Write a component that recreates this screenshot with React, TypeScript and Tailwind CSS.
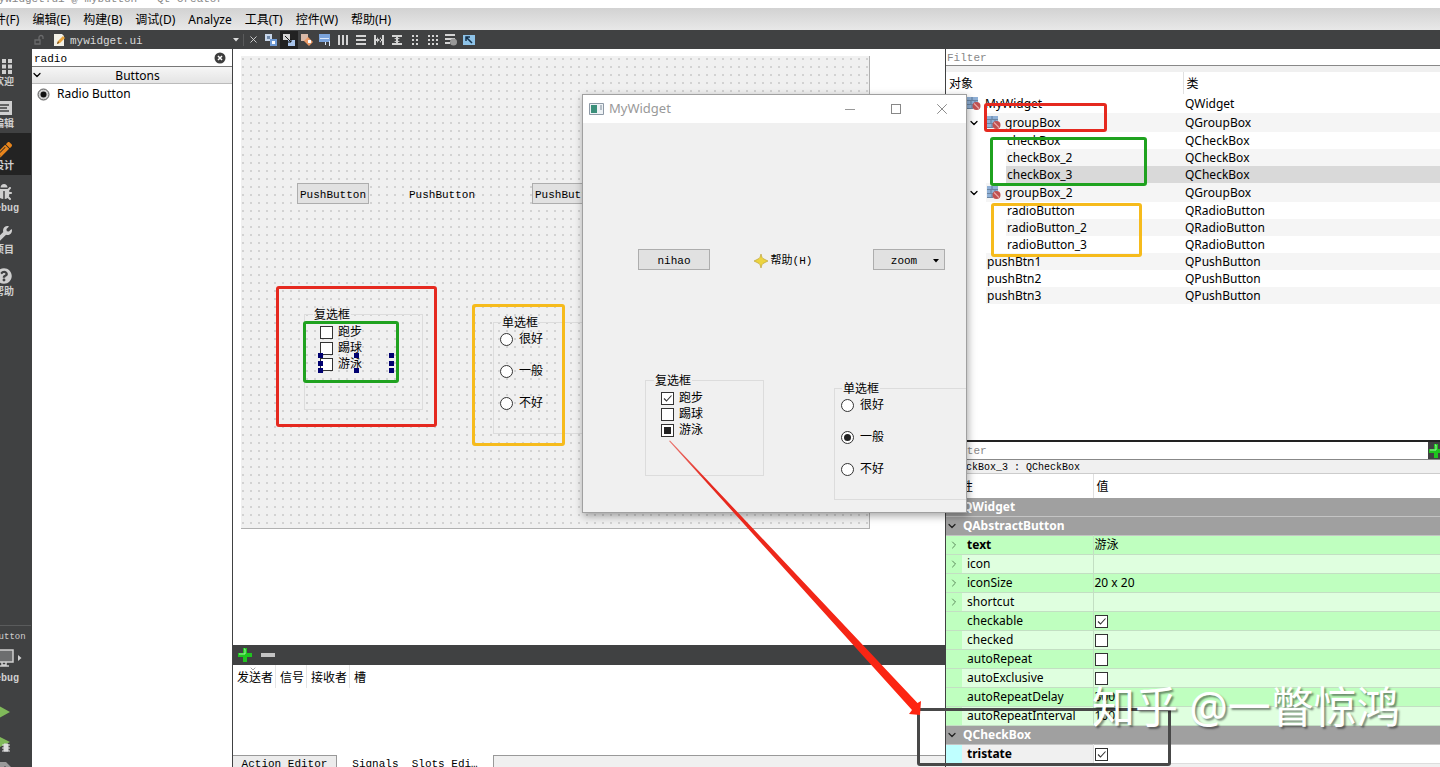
import type { ReactNode } from "react";
import { FaBug, FaPencilAlt, FaQuestionCircle, FaWrench } from "react-icons/fa";
import { ChevronDown, ChevronRight, X } from "lucide-react";
import clsx from "clsx";

const mono = "font-['Liberation_Mono','Noto_Sans_CJK_SC',monospace]";

const menus = ["文件(F)", "编辑(E)", "构建(B)", "调试(D)", "Analyze", "工具(T)", "控件(W)", "帮助(H)"];

type TreeRow = { name: string; type: string; level: 0 | 1 | 2; group?: boolean; selected?: boolean };

const objects: TreeRow[] = [
  { name: "MyWidget", type: "QWidget", level: 0, group: true },
  { name: "groupBox", type: "QGroupBox", level: 1, group: true },
  { name: "checkBox", type: "QCheckBox", level: 2 },
  { name: "checkBox_2", type: "QCheckBox", level: 2 },
  { name: "checkBox_3", type: "QCheckBox", level: 2, selected: true },
  { name: "groupBox_2", type: "QGroupBox", level: 1, group: true },
  { name: "radioButton", type: "QRadioButton", level: 2 },
  { name: "radioButton_2", type: "QRadioButton", level: 2 },
  { name: "radioButton_3", type: "QRadioButton", level: 2 },
  { name: "pushBtn1", type: "QPushButton", level: 1 },
  { name: "pushBtn2", type: "QPushButton", level: 1 },
  { name: "pushBtn3", type: "QPushButton", level: 1 },
];

type Property = { name: string; value?: string; checked?: boolean; expandable?: boolean; bold?: boolean };

const buttonProps: Property[] = [
  { name: "text", value: "游泳", expandable: true, bold: true },
  { name: "icon", expandable: true },
  { name: "iconSize", value: "20 x 20", expandable: true },
  { name: "shortcut", expandable: true },
  { name: "checkable", checked: true },
  { name: "checked", checked: false },
  { name: "autoRepeat", checked: false },
  { name: "autoExclusive", checked: false },
  { name: "autoRepeatDelay", value: "300" },
  { name: "autoRepeatInterval", value: "100" },
];

function Check({ id, checked, partial, label }: { id?: string; checked?: boolean; partial?: boolean; label?: string }) {
  return (
    <span className="relative grid size-[13px] shrink-0">
      <input
        id={id}
        type="checkbox"
        aria-label={label}
        defaultChecked={checked}
        className="peer col-start-1 row-start-1 size-[13px] appearance-none border border-[#333] bg-white"
      />
      {partial ? (
        <svg viewBox="0 0 13 13" className="pointer-events-none col-start-1 row-start-1 size-[13px]">
          <rect x="3" y="3" width="7" height="7" fill="#222" />
        </svg>
      ) : (
        <svg viewBox="0 0 13 13" className="pointer-events-none invisible col-start-1 row-start-1 size-[13px] peer-checked:visible">
          <path d="M3 6.5 5.5 9 10.5 3.5" fill="none" stroke="#333" strokeWidth="1.1" />
        </svg>
      )}
    </span>
  );
}

function Radio({ id, name, checked }: { id: string; name: string; checked?: boolean }) {
  return (
    <span className="grid size-[13px] shrink-0 place-items-center">
      <input
        id={id}
        name={name}
        type="radio"
        defaultChecked={checked}
        className="peer col-start-1 row-start-1 size-[13px] appearance-none rounded-full border border-[#333] bg-white"
      />
      <span className="pointer-events-none invisible col-start-1 row-start-1 size-[7px] rounded-full bg-[#222] peer-checked:visible" />
    </span>
  );
}

function CheckGroup({ prefix, live }: { prefix: string; live?: boolean }) {
  return (
    <fieldset className="h-[104px] w-[119px] border border-[#dcdcdc] pt-px pl-[15px] text-[12px] leading-4">
      <legend className="ml-[-7px] px-px pt-px leading-4">复选框</legend>
      {["跑步", "踢球", "游泳"].map((text, i) => (
        <div key={text} className="flex h-4 items-center gap-[5px]">
          <Check id={`${prefix}-check-${i}`} checked={live && i === 0} partial={live && i === 2} />
          <label htmlFor={`${prefix}-check-${i}`}>{text}</label>
        </div>
      ))}
    </fieldset>
  );
}

function RadioGroup({ prefix, live }: { prefix: string; live?: boolean }) {
  return (
    <fieldset className="h-[120px] w-[160px] border border-[#dcdcdc] pl-[6px] text-[12px] leading-4">
      <legend className="ml-px px-px pt-px leading-4">单选框</legend>
      <div className="flex flex-col gap-4">
        {["很好", "一般", "不好"].map((text, i) => (
          <div key={text} className="flex h-4 items-center gap-[6px]">
            <Radio id={`${prefix}-radio-${i}`} name={`${prefix}-mood`} checked={live && i === 1} />
            <label htmlFor={`${prefix}-radio-${i}`}>{text}</label>
          </div>
        ))}
      </div>
    </fieldset>
  );
}

function PushButton({ children, flat }: { children: ReactNode; flat?: boolean }) {
  return (
    <button
      className={clsx(
        mono,
        "flex h-[21px] w-[72px] items-center justify-center border pt-[2px] text-[11px] leading-4",
        flat ? "border-transparent" : "border-[#adadad] bg-[#e1e1e1]"
      )}
    >
      {children}
    </button>
  );
}

function ContainerIcon() {
  return (
    <svg viewBox="0 0 14 14" className="size-[14px] shrink-0">
      <path d="M0 0h11v3H0zM0 4h11v3H0zM0 8h8v3H0z" fill="#8fb0d6" />
      <path d="M0 3.500h11M0 7.500h8M0 11.500h6M5 0v3M8 4v3M4 4v3M5 8v3" stroke="#5a7898" strokeWidth=".9" />
      <circle cx="9.5" cy="9" r="4" fill="#c05050" />
      <path d="m7 6.500 5 5" stroke="#e8a8a8" strokeWidth="1.2" />
    </svg>
  );
}

function PlusIcon() {
  return (
    <svg viewBox="0 0 14 14" className="size-[14px]">
      <path d="M5 0h4v5h5v4H9v5H5V9H0V5h5z" fill="#1fc41f" />
      <path d="M6 1h1v5H1" fill="none" stroke="#a2f5a2" />
    </svg>
  );
}

function ToolIcon({ children, active }: { children: ReactNode; active?: boolean }) {
  return (
    <button className={clsx("grid h-[18px] w-[18px] place-items-center", active && "bg-[#222]")}>
      <svg viewBox="0 0 12 12" className="size-3" fill="#d4d4d4">
        {children}
      </svg>
    </button>
  );
}

function Toolbar() {
  return (
    <div className="flex h-[19px] shrink-0 items-center bg-[#404142] pl-[33px] text-[#d8d8d8]">
      <svg viewBox="0 0 12 12" className="size-3" fill="none" stroke="#6a6b6c" strokeWidth="1.3">
        <path d="M2 6h5v4H2zM6 6V3.500a2 2 0 0 1 4 0V5" />
      </svg>
      <svg viewBox="0 0 12 12" className="ml-2 size-3">
        <path d="M1 0h8l2 2v10H1z" fill="#f2f0e6" />
        <path d="m4 10 1-3 5-5 2 2-5 5z" fill="#e8a33c" />
        <path d="m4 10 1-3 1 2z" fill="#5b3b12" />
      </svg>
      <span className={clsx(mono, "ml-[5px] w-[163px] pt-[3px] text-[11px] leading-4")}>mywidget.ui</span>
      <svg viewBox="0 0 6 4" className="h-1 w-[6px]" fill="#ddd">
        <path d="M0 0h6L3 3.500z" />
      </svg>
      <span className="mx-1 h-3 w-px bg-[#5a5b5c]" />
      <button aria-label="Close document" className="mr-[3px]">
        <X className="size-[11px]" strokeWidth={2} />
      </button>
      <ToolIcon>
        <path d="M0 0h7v7H0z" fill="#c7d6ea" />
        <path d="M5 5h7v7H5z" fill="#6f9bd6" />
        <path d="M7 7h3v3H7z" fill="#fff" />
        <path d="M2 2h3v3H2z" fill="#6f88a8" />
      </ToolIcon>
      <ToolIcon active>
        <path d="M0 0h7v6H0z" />
        <path d="M5 6h7v6H5z" fill="#a9c4ea" />
        <path d="m2 2 6 6M8 5v3H5" stroke="#111" fill="none" />
      </ToolIcon>
      <ToolIcon>
        <path d="M0 0h7v7H0z" fill="#d8b9a8" />
        <path d="m7 3 5 5-4 4-5-5z" fill="#eb9a66" />
        <path d="M7 6h3v3H7z" fill="#fff" />
      </ToolIcon>
      <ToolIcon>
        <path d="M0 0h11v8H0z" fill="#7ba4dc" />
        <path d="M1 4h9v1H1zM6 8h1v3H6zM10 7h1v5h-1z" fill="#dbe8fa" />
      </ToolIcon>
      <ToolIcon>
        <path d="M1 1h2v10H1zM5 1h2v10H5zM9 1h2v10H9z" />
      </ToolIcon>
      <ToolIcon>
        <path d="M1 1h10v2H1zM1 5h10v2H1zM1 9h10v2H1z" />
      </ToolIcon>
      <ToolIcon>
        <path d="M1 1h2v10H1zM9 1h2v10H9zM3 5h6v2H3zM4 3l2 3-2 3zM8 3 6 6l2 3z" />
      </ToolIcon>
      <ToolIcon>
        <path d="M1 1h10v2H1zM1 9h10v2H1zM5 3h2v6H5zM3 4h6L6 6l3 2H3l3-2z" />
      </ToolIcon>
      <ToolIcon>
        <path d="M3 1h2v2H3zM7 1h2v2H7zM3 5h2v2H3zM7 5h2v2H7zM3 9h2v2H3zM7 9h2v2H7z" />
      </ToolIcon>
      <ToolIcon>
        <path d="M1 1h2v2H1zM5 1h2v2H5zM9 1h2v2H9zM1 5h2v2H1zM5 5h2v2H5zM9 5h2v2H9zM1 9h2v2H1zM5 9h2v2H5zM9 9h2v2H9z" />
      </ToolIcon>
      <ToolIcon>
        <path d="M0 0h10v2H0zM0 4h10v2H0zM0 8h5v2H0z" />
        <circle cx="8.500" cy="8" r="3.500" fill="#999" />
      </ToolIcon>
      <ToolIcon>
        <path d="M0 1h12v10H0z" fill="#8ec3e8" />
        <path d="m3 3 6 6M3 7V3h4" stroke="#14324d" strokeWidth="1.500" fill="none" />
      </ToolIcon>
    </div>
  );
}

function Mode({ label, active, children }: { label: string; active?: boolean; children: ReactNode }) {
  return (
    <button
      className={clsx(
        "flex h-[42px] w-[54px] shrink-0 flex-col items-center justify-end text-[#cfcfcf]",
        active && "bg-[#232323]"
      )}
    >
      {children}
      <span className={clsx(mono, "pt-px text-[10px] leading-4 font-bold")}>{label}</span>
    </button>
  );
}

function ModeRail() {
  return (
    <nav className="flex w-[31px] shrink-0 flex-col items-end overflow-hidden bg-[#404142]">
      <Mode label="欢迎">
        <svg viewBox="0 0 16 16" className="size-4" fill="currentColor">
          <path d="M0 1h4v4H0zM6 1h4v4H6zM12 1h4v4h-4zM0 6.500h4v4H0zM6 6.500h4v4H6zM12 6.500h4v4h-4zM0 12h4v4H0zM6 12h4v4H6zM12 12h4v4h-4z" />
        </svg>
      </Mode>
      <Mode label="编辑">
        <svg viewBox="0 0 16 16" className="size-4" fill="currentColor">
          <path d="M0 1h16v14H0z" />
          <path d="M3 5h10M3 8h8M3 11h10" stroke="#404142" strokeWidth="1.300" />
        </svg>
      </Mode>
      <Mode label="设计" active>
        <FaPencilAlt className="size-4 text-[#e8851c]" />
      </Mode>
      <Mode label="Debug">
        <FaBug className="size-4" />
      </Mode>
      <Mode label="项目">
        <FaWrench className="size-4" />
      </Mode>
      <Mode label="帮助">
        <FaQuestionCircle className="size-4" />
      </Mode>
      <div className="mt-auto flex w-[54px] flex-col items-center border-t border-[#5a5b5c] text-[#d0d0d0]">
        <span className={clsx(mono, "mt-[3px] text-[9px] leading-4")}>mybutton</span>
        <button className="mt-1 flex items-center gap-1 pl-2" aria-label="Kit selector">
          <svg viewBox="0 0 20 18" className="h-[18px] w-5" fill="none" stroke="currentColor">
            <path d="M1 1h18v12H1z" fill="#6d6e6f" strokeWidth="1.500" />
            <path d="M8 13v3h4v-3M5 17h10" strokeWidth="1.500" />
          </svg>
          <svg viewBox="0 0 4 6" className="h-[6px] w-1" fill="currentColor">
            <path d="M0 0v6l3.500-3z" />
          </svg>
        </button>
        <span className={clsx(mono, "mt-1 text-[10px] leading-4 font-bold")}>Debug</span>
        <button className="mt-[18px]" aria-label="Run">
          <svg viewBox="0 0 14 14" className="size-[14px]">
            <path d="M0 0v14l13-7z" fill="#80b95a" />
          </svg>
        </button>
        <button className="mt-4" aria-label="Start debugging">
          <svg viewBox="0 0 16 18" className="h-[18px] w-4">
            <path d="M0 0v14l14-7z" fill="#80b95a" />
            <path d="M8 9h4v7H8zM6 10h8M6 13h8M6 16h8" fill="#ddd" stroke="#ddd" />
          </svg>
        </button>
        <button className="mt-2 h-[6px] overflow-hidden" aria-label="Build">
          <svg viewBox="0 0 16 16" className="size-4">
            <path d="M2 1h8l5 5-2 3-4-4-7 7z" fill="#9a9a9a" />
          </svg>
        </button>
      </div>
    </nav>
  );
}

function WidgetBox() {
  return (
    <aside className="flex w-[202px] shrink-0 flex-col border-x border-[#404142] bg-white">
      <div className="flex h-[18px] items-center border-b border-[#777]">
        <input
          aria-label="Widget filter"
          defaultValue="radio"
          className={clsx(mono, "h-[17px] min-w-0 flex-1 px-[2px] pt-[2px] text-[11px] outline-none")}
        />
        <button aria-label="Clear filter" className="mr-[6px]">
          <svg viewBox="0 0 12 12" className="size-3">
            <circle cx="6" cy="6" r="5.500" fill="#3d3d3d" />
            <path d="m4 4 4 4M8 4 4 8" stroke="#fff" strokeWidth="1.500" />
          </svg>
        </button>
      </div>
      <button className="flex h-[17px] items-center border-b border-[#bbb] bg-linear-to-b from-[#f6f6f6] to-[#e4e4e4] text-[12px]">
        <ChevronDown className="-ml-px size-3" strokeWidth={2.5} />
        <span className="flex-1 pt-[2px] leading-4">Buttons</span>
      </button>
      <div className="flex h-5 items-center gap-[7px] pl-[5px] text-[12px]">
        <svg viewBox="0 0 13 13" className="size-[13px]">
          <circle cx="6.500" cy="6.500" r="5.500" fill="#d0d0d0" stroke="#555" />
          <circle cx="6.500" cy="6.500" r="3" fill="#111" />
        </svg>
        Radio Button
      </div>
    </aside>
  );
}

// canvas with the form being edited; widgets sit at free positions on it
function FormEditor() {
  return (
    <div className="min-h-0 flex-1 overflow-hidden bg-white pt-[7px] pl-2">
      <div className="relative h-[473px] w-[629px] border-r border-b border-[#b0b0b0] bg-[#f0f0f0] bg-[radial-gradient(circle_at_2px_3px,#d2d2d2_1px,transparent_1px)] bg-size-[8px_8px]">
        <div className="absolute top-[127px] left-[56px]">
          <PushButton>PushButton</PushButton>
        </div>
        <div className="absolute top-[127px] left-[165px]">
          <PushButton flat>PushButton</PushButton>
        </div>
        <div className="absolute top-[127px] left-[291px]">
          <PushButton>PushButton</PushButton>
        </div>
        <div className="absolute top-[250px] left-[63px]">
          <CheckGroup prefix="form" />
          <div className="absolute top-[47px] left-[14px] flex h-[20px] w-[76px] flex-col justify-between">
            <div className="flex justify-between">
              <Handle /> <Handle /> <Handle />
            </div>
            <div className="flex justify-between">
              <Handle /> <Handle />
            </div>
            <div className="flex justify-between">
              <Handle /> <Handle /> <Handle />
            </div>
          </div>
        </div>
        <div className="absolute top-[258px] left-[252px]">
          <RadioGroup prefix="form" />
        </div>
      </div>
    </div>
  );
}

function Handle() {
  return <span className="size-[5px] bg-[#000070]" />;
}

function SignalEditor() {
  return (
    <section className="flex h-[122px] shrink-0 flex-col overflow-hidden bg-white text-[12px]">
      <div className="flex h-5 shrink-0 items-center gap-[9px] bg-[#404142] pl-[5px]">
        <button aria-label="Add connection">
          <PlusIcon />
        </button>
        <button aria-label="Remove connection" className="h-1 w-[14px] bg-[#c4c4c4]" />
      </div>
      <div className="flex flex-1 items-start">
        {["发送者", "信号", "接收者", "槽"].map((title) => (
          <span key={title} className="relative h-[23px] border-r border-[#e5e5e5] pt-[5px] pr-[2px] pl-1 leading-4 last:border-0">
            {title}
            {title === "发送者" && <ChevronDown className="absolute top-0 left-4 size-2 text-[#777]" strokeWidth={2} />}
          </span>
        ))}
      </div>
      <div className={clsx(mono, "flex h-3 shrink-0 overflow-hidden bg-[#f0f0f0] text-[11px] leading-4")}>
        <button className="flex h-5 w-[104px] justify-center border-t border-r border-[#999] bg-[#ececec]">Action Editor</button>
        <button className="flex h-5 w-[156px] justify-center border-t border-white bg-white">Signals _Slots Edi…</button>
        <span className="h-5 flex-1 border-t border-l border-[#999]" />
      </div>
    </section>
  );
}

const indents = ["w-5", "w-10", "w-[60px]"];

function ObjectInspector() {
  return (
    <section className="flex min-h-0 flex-1 flex-col bg-white">
      <input
        aria-label="Object filter"
        placeholder="Filter"
        className={clsx(mono, "h-[17px] shrink-0 border-b border-[#888] px-px pt-[2px] text-[11px] outline-none placeholder:text-[#888]")}
      />
      <div className="h-[6px] shrink-0 bg-[#f0f0f0]" />
      <table className="w-full table-fixed border-collapse text-[12px]">
        <thead>
          <tr className="h-[22px] text-left">
            <th className="w-[237px] border-r border-[#e0e0e0] p-0 pt-[2px] pl-[3px] font-normal">对象</th>
            <th className="p-0 pt-[2px] pl-[3px] font-normal">类</th>
          </tr>
        </thead>
        <tbody className="leading-4">
          {objects.map((row, i) => {
            const shade = row.selected ? "bg-[#d9d9d9]" : i % 2 ? "bg-[#f5f5f5]" : "bg-white";
            const height = row.group ? "h-[19px]" : "h-[17px]";
            return (
              <tr key={row.name} className={height}>
                <td className="p-0">
                  <div className={clsx("flex", height)}>
                    <span className={clsx("flex shrink-0 items-center justify-end pr-[6px]", indents[row.level])}>
                      {row.group && row.level === 1 && <ChevronDown className="size-3" strokeWidth={2.5} />}
                    </span>
                    <span className={clsx("flex flex-1 items-center gap-1 pl-px", shade)}>
                      {row.group && <ContainerIcon />}
                      {row.name}
                    </span>
                  </div>
                </td>
                <td className={clsx("p-0 pl-[2px]", shade)}>{row.type}</td>
              </tr>
            );
          })}
        </tbody>
      </table>
    </section>
  );
}

function Category({ name }: { name: string }) {
  return (
    <tr className="border-b border-[#c4c4c4] bg-[#a0a0a0] text-white">
      <th colSpan={2} className="p-0 text-left font-bold">
        <span className="flex h-[18px] items-center gap-[5px]">
          <ChevronDown className="size-3 text-[#222]" strokeWidth={2.5} />
          {name}
        </span>
      </th>
    </tr>
  );
}

function PropertyEditor() {
  return (
    <section className="flex h-[327px] shrink-0 flex-col border-t-2 border-[#222] bg-white">
      <div className="flex h-[18px] shrink-0 border-b border-[#888]">
        <input
          aria-label="Property filter"
          placeholder="Filter"
          className={clsx(mono, "min-w-0 flex-1 px-px pt-[2px] text-[11px] outline-none placeholder:text-[#888]")}
        />
        <button aria-label="Add property" className="w-[12px] overflow-hidden bg-[#404142] pl-px">
          <PlusIcon />
        </button>
      </div>
      <p className={clsx(mono, "h-[14px] shrink-0 border-b border-[#ccc] bg-[#f0f0f0] pl-[2px] text-[10px] leading-4")}>
        checkBox_3 : QCheckBox
      </p>
      <div className="min-h-0 flex-1 bg-[#f0f0f0] pb-[5px]">
        <table className="h-full w-full table-fixed border-collapse bg-white text-[12px] leading-4">
          <thead>
            <tr className="h-[24px] text-left">
              <th className="w-[147px] border-r border-[#e0e0e0] p-0 pt-[2px] pl-[3px] font-normal">属性</th>
              <th className="p-0 pt-[2px] pl-[3px] font-normal">值</th>
            </tr>
          </thead>
          <tbody>
            <Category name="QWidget" />
            <Category name="QAbstractButton" />
            {buttonProps.map((prop, i) => (
              <tr key={prop.name} className={clsx("border-b border-[#c3dfc3]", i % 2 ? "bg-[#dfffdf]" : "bg-[#bfffbf]")}>
                <th className={clsx("border-r border-[#c3dfc3] p-0 text-left", prop.bold ? "font-bold" : "font-normal")}>
                  <span className="flex items-center gap-[5px]">
                    <span className="flex h-[18px] w-4 items-center justify-center bg-[#bfffbf]">
                      {prop.expandable && <ChevronRight className="size-3 text-[#5c8a5c]" strokeWidth={2} />}
                    </span>
                    {prop.name}
                  </span>
                </th>
                <td className="p-0 pl-px">
                  {prop.checked === undefined ? prop.value : <Check checked={prop.checked} label={prop.name} />}
                </td>
              </tr>
            ))}
            <Category name="QCheckBox" />
            <tr className="border-b border-[#ddd]">
              <th className="border-r border-[#ddd] bg-[#f0f0f0] p-0 text-left font-bold">
                <span className="flex items-center gap-[5px]">
                  <span className="h-[18px] w-4 bg-[#bfffff]" />
                  tristate
                </span>
              </th>
              <td className="p-0 pl-px">
                <Check checked label="tristate" />
              </td>
            </tr>
          </tbody>
        </table>
      </div>
    </section>
  );
}

// the running program, floating above the IDE
function PreviewWindow() {
  return (
    <div
      role="dialog"
      aria-label="MyWidget"
      className="absolute top-[94px] left-[582px] flex h-[419px] w-[385px] flex-col overflow-hidden border border-[#a0a0a0] bg-[#f0f0f0] shadow-[1px_3px_8px_rgba(0,0,0,0.35)]"
    >
      <div className="flex h-[28px] shrink-0 items-center bg-white pr-px pl-[6px] text-[13px] text-[#999]">
        <svg viewBox="0 0 15 12" className="h-3 w-[15px]">
          <path d="M.5.500h14v11H.5z" fill="#eef2f5" stroke="#8d99a5" />
          <path d="M2 2h6v8H2z" fill="#3b8f7a" />
          <path d="M12 2v5" stroke="#7d8b99" />
        </svg>
        <span className="ml-[5px] flex-1">MyWidget</span>
        <div className="flex text-[#666]">
          <button aria-label="Minimize" className="grid h-7 w-[46px] place-items-center">
            <span className="h-px w-[10px] bg-[#999]" />
          </button>
          <button aria-label="Maximize" className="grid h-7 w-[46px] place-items-center">
            <span className="size-[10px] border border-[#888]" />
          </button>
          <button aria-label="Close" className="grid h-7 w-[46px] place-items-center">
            <X className="size-[18px]" strokeWidth={1} />
          </button>
        </div>
      </div>
      <div className="relative flex-1">
        <div className="absolute top-[126px] left-[55px]">
          <PushButton>nihao</PushButton>
        </div>
        <div className="absolute top-[126px] left-[164px]">
          <PushButton flat>
            <svg viewBox="0 0 14 14" className="mr-[3px] size-[14px] shrink-0">
              <path d="M7 0c.6 3 1.500 4.500 3 5l4 2-4 2c-1.500.5-2.400 2-3 5-.6-3-1.500-4.500-3-5L0 7l4-2c1.500-.5 2.400-2 3-5z" fill="#ecd440" stroke="#b99a28" strokeWidth=".6" />
            </svg>
            <span className="shrink-0">帮助(H)</span>
          </PushButton>
        </div>
        <div className="absolute top-[126px] left-[290px]">
          <PushButton>
            <span className="flex-1 pl-px">zoom</span>
            <svg viewBox="0 0 6 4" className="mr-[5px] h-1 w-[6px]">
              <path d="M0 0h6L3 3.500z" />
            </svg>
          </PushButton>
        </div>
        <div className="absolute top-[249px] left-[62px]">
          <CheckGroup prefix="run" live />
        </div>
        <div className="absolute top-[257px] left-[251px]">
          <RadioGroup prefix="run" live />
        </div>
      </div>
    </div>
  );
}

// hand-drawn marks over the windows
function Annotations() {
  return (
    <div className="pointer-events-none absolute inset-0">
      <div className="absolute top-[286px] left-[276px] h-[141px] w-[161px] rounded-[3px] border-3 border-[#e5291f]" />
      <div className="absolute top-[321px] left-[303px] h-[62px] w-[96px] rounded-[3px] border-3 border-[#1fa21f]" />
      <div className="absolute top-[304px] left-[472px] h-[142px] w-[93px] rounded-[3px] border-3 border-[#f6bb1c]" />
      <div className="absolute top-[103px] left-[984px] h-[29px] w-[123px] rounded-[3px] border-3 border-[#e5291f]" />
      <div className="absolute top-[137px] left-[990px] h-[49px] w-[157px] rounded-[3px] border-3 border-[#1fa21f]" />
      <div className="absolute top-[203px] left-[991px] h-[54px] w-[151px] rounded-[3px] border-3 border-[#f6bb1c]" />
      <div className="absolute top-[708px] left-[917px] h-[58px] w-[254px] rounded-[3px] border-3 border-[#484848]" />
      <svg viewBox="0 0 260 280" className="absolute top-[438px] left-[665px] h-[280px] w-[260px]">
        <defs>
          <linearGradient id="fade" x1="0" y1="0" x2="1" y2="1">
            <stop offset="0" stopColor="#e5291f" stopOpacity="0.6" />
            <stop offset="0.15" stopColor="#e5291f" />
            <stop offset="1" stopColor="#ff2410" />
          </linearGradient>
        </defs>
        <path d="M4 3 5 2.500 252.500 265l3.500-2-1 14-11-1 3-4z" fill="url(#fade)" />
      </svg>
      <span className="absolute top-[679px] left-[1092px] text-[43px] leading-[56px] whitespace-nowrap text-white [text-shadow:2px_2px_2px_rgba(0,0,0,0.45)]">
        知乎 @一瞥惊鸿
      </span>
    </div>
  );
}

export default function App() {
  return (
    <div className="relative flex h-screen flex-col overflow-hidden bg-white font-['Noto_Sans','Noto_Sans_CJK_SC',sans-serif] text-black">
      <div className={clsx(mono, "h-2 shrink-0 overflow-hidden text-[11px] text-[#888]")}>
        <p className="-mt-[9px] -ml-2 leading-4">mywidget.ui @ mybutton - Qt Creator</p>
      </div>
      <nav className="flex h-[22px] shrink-0 items-center gap-[13px] bg-linear-to-b from-[#d2d2d2] to-[#e8e8e8] pt-[2px] text-[12px]">
        {menus.map((menu) => (
          <button key={menu} className="shrink-0 first:-ml-[18px]">
            {menu}
          </button>
        ))}
      </nav>
      <Toolbar />
      <div className="flex min-h-0 flex-1">
        <ModeRail />
        <WidgetBox />
        <main className="flex min-w-0 flex-1 flex-col">
          <FormEditor />
          <SignalEditor />
        </main>
        <aside className="flex w-[495px] shrink-0 flex-col border-l border-[#404142]">
          <ObjectInspector />
          <PropertyEditor />
        </aside>
      </div>
      <PreviewWindow />
      <Annotations />
    </div>
  );
}
